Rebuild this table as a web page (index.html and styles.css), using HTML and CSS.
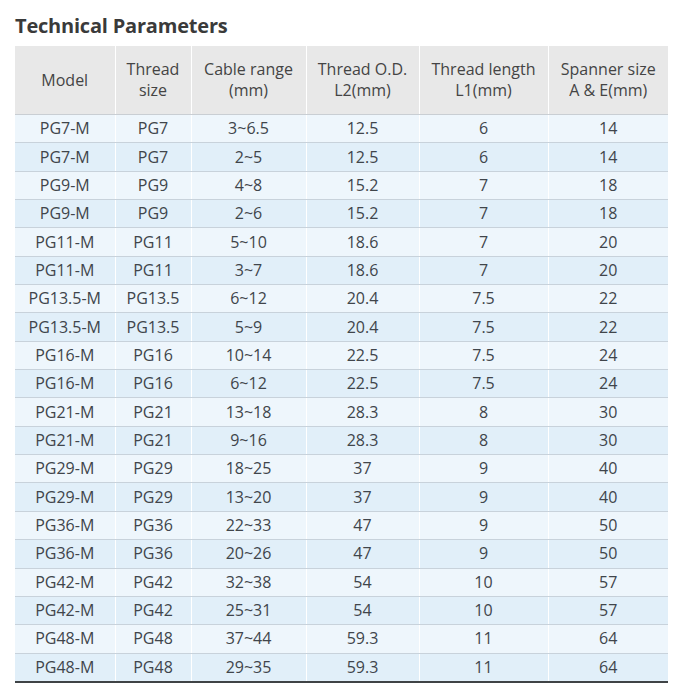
FILE: index.html
```html
<!DOCTYPE html>
<html>
<head>
<meta charset="utf-8">
<link rel="stylesheet" href="styles.css">
</head>
<body>
<div class="page">
  <h1 class="title">Technical Parameters</h1>
  <table class="params">
    <colgroup>
      <col class="c1"><col class="c2"><col class="c3"><col class="c4"><col class="c5"><col class="c6">
    </colgroup>
    <thead>
      <tr>
        <th>Model</th>
        <th>Thread<br>size</th>
        <th>Cable range<br>(mm)</th>
        <th>Thread O.D.<br>L2(mm)</th>
        <th>Thread length<br>L1(mm)</th>
        <th>Spanner size<br>A &amp; E(mm)</th>
      </tr>
    </thead>
    <tbody>
      <tr><td>PG7-M</td><td>PG7</td><td>3~6.5</td><td>12.5</td><td>6</td><td>14</td></tr>
      <tr><td>PG7-M</td><td>PG7</td><td>2~5</td><td>12.5</td><td>6</td><td>14</td></tr>
      <tr><td>PG9-M</td><td>PG9</td><td>4~8</td><td>15.2</td><td>7</td><td>18</td></tr>
      <tr><td>PG9-M</td><td>PG9</td><td>2~6</td><td>15.2</td><td>7</td><td>18</td></tr>
      <tr><td>PG11-M</td><td>PG11</td><td>5~10</td><td>18.6</td><td>7</td><td>20</td></tr>
      <tr><td>PG11-M</td><td>PG11</td><td>3~7</td><td>18.6</td><td>7</td><td>20</td></tr>
      <tr><td>PG13.5-M</td><td>PG13.5</td><td>6~12</td><td>20.4</td><td>7.5</td><td>22</td></tr>
      <tr><td>PG13.5-M</td><td>PG13.5</td><td>5~9</td><td>20.4</td><td>7.5</td><td>22</td></tr>
      <tr><td>PG16-M</td><td>PG16</td><td>10~14</td><td>22.5</td><td>7.5</td><td>24</td></tr>
      <tr><td>PG16-M</td><td>PG16</td><td>6~12</td><td>22.5</td><td>7.5</td><td>24</td></tr>
      <tr><td>PG21-M</td><td>PG21</td><td>13~18</td><td>28.3</td><td>8</td><td>30</td></tr>
      <tr><td>PG21-M</td><td>PG21</td><td>9~16</td><td>28.3</td><td>8</td><td>30</td></tr>
      <tr><td>PG29-M</td><td>PG29</td><td>18~25</td><td>37</td><td>9</td><td>40</td></tr>
      <tr><td>PG29-M</td><td>PG29</td><td>13~20</td><td>37</td><td>9</td><td>40</td></tr>
      <tr><td>PG36-M</td><td>PG36</td><td>22~33</td><td>47</td><td>9</td><td>50</td></tr>
      <tr><td>PG36-M</td><td>PG36</td><td>20~26</td><td>47</td><td>9</td><td>50</td></tr>
      <tr><td>PG42-M</td><td>PG42</td><td>32~38</td><td>54</td><td>10</td><td>57</td></tr>
      <tr><td>PG42-M</td><td>PG42</td><td>25~31</td><td>54</td><td>10</td><td>57</td></tr>
      <tr><td>PG48-M</td><td>PG48</td><td>37~44</td><td>59.3</td><td>11</td><td>64</td></tr>
      <tr><td>PG48-M</td><td>PG48</td><td>29~35</td><td>59.3</td><td>11</td><td>64</td></tr>
    </tbody>
  </table>
</div>
</body>
</html>
```

FILE: styles.css
```css
html, body {
  margin: 0;
  padding: 0;
  background: #ffffff;
}
.page {
  padding: 12px 0 0 15px;
  font-family: "Open Sans", "Noto Sans", sans-serif;
  color: #444;
}
.title {
  margin: 0 0 6px 0;
  font-size: 20px;
  line-height: 28px;
  font-weight: 700;
  color: #3a3a3a;
  letter-spacing: -0.2px;
}
.params {
  border-collapse: collapse;
  table-layout: fixed;
  width: 653px;
  font-size: 16px;
}
.c1 { width: 100px; }
.c2 { width: 76px; }
.c3 { width: 115px; }
.c4 { width: 113px; }
.c5 { width: 129px; }
.c6 { width: 120px; }
.params th {
  background: #e8e8e8;
  font-weight: 400;
  color: #444;
  height: 68px;
  padding: 0;
  line-height: 21px;
  text-align: center;
  border-left: 1px solid #ffffff;
  border-bottom: 1px solid #c9ced3;
}
.params th:first-child,
.params td:first-child {
  border-left: none;
}
.params td {
  height: 27.35px;
  padding: 0;
  text-align: center;
  line-height: 21px;
  color: #40454b;
  border-left: 1px solid #ffffff;
  border-bottom: 1px solid #c8d2db;
}
.params tbody tr:nth-child(odd) td {
  background: #eef6fc;
}
.params tbody tr:nth-child(even) td {
  background: #e1eff9;
}
.params tbody tr:last-child td {
  border-bottom: 2px solid #3f4346;
}
```
